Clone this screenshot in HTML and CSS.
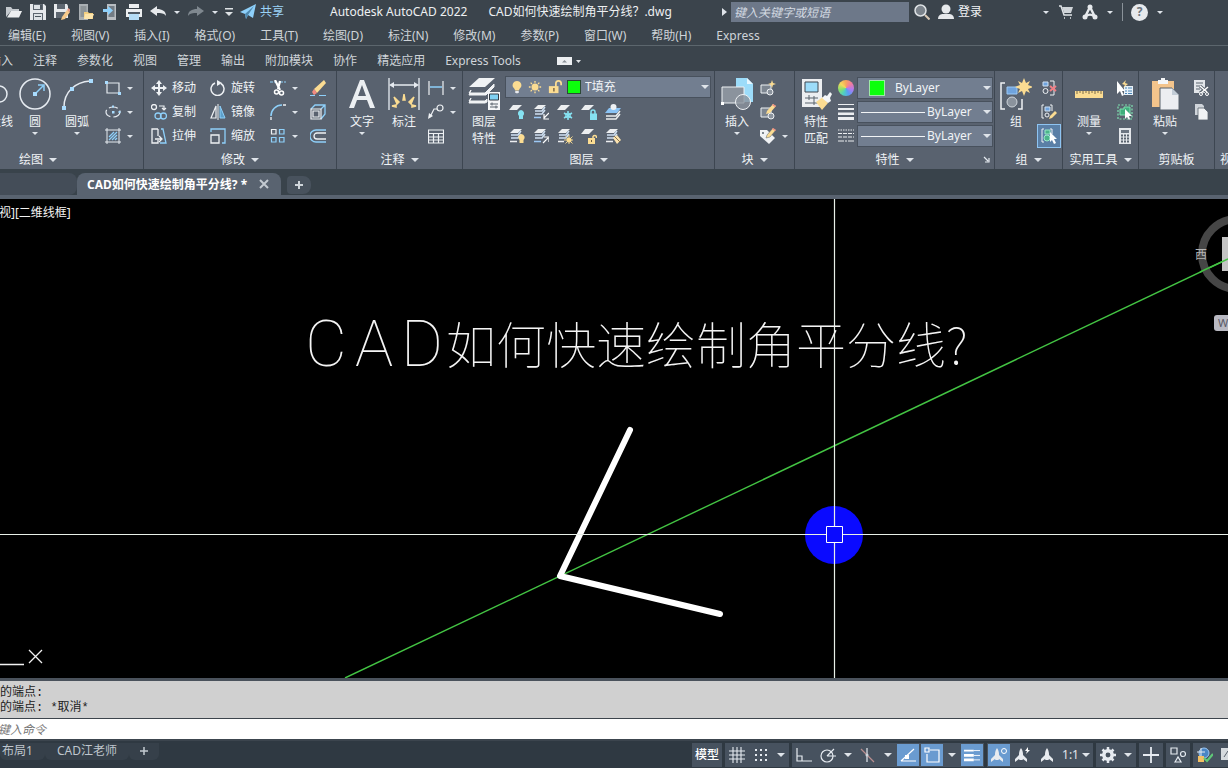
FILE: index.html
```html
<!DOCTYPE html>
<html lang="zh-CN">
<head>
<meta charset="utf-8">
<title>Autodesk AutoCAD 2022</title>
<link rel="stylesheet" href="styles.css">
</head>
<body>
<svg class="defs" aria-hidden="true">
  <defs>
    <symbol id="sheets" viewBox="0 0 16 16">
      <path d="M5 1h8L9 5H1z" fill="#eceef0"/>
      <path d="M2 7h7l3-4M2 10h7l3-4" fill="none" stroke="#cfe0f2" stroke-width="1.5"/>
    </symbol>
    <symbol id="bulb" viewBox="0 0 12 16">
      <path d="M6 1a5 5 0 0 0-3 9l1 2h4l1-2a5 5 0 0 0-3-9z" fill="currentColor"/><path d="M4 12.500h4v1.500l-1 1H5l-1-1z" fill="#e8eaee"/>
    </symbol>
    <symbol id="sun" viewBox="0 0 16 16">
      <circle cx="8" cy="8" r="4" fill="#fbdc92"/><path d="M8 1v2M8 13v2M1 8h2M13 8h2M3 3l1.500 1.500M11.500 11.500L13 13M13 3l-1.500 1.500M4.500 11.500L3 13" stroke="#fbdc92" stroke-width="1.500"/>
    </symbol>
    <symbol id="openlock" viewBox="0 0 16 16">
      <path d="M9 8V4a3 3 0 0 1 6 0v2" fill="none" stroke="#fbdc92" stroke-width="2"/><path d="M1 7h11v8H1z" fill="#fbdc92"/><path d="M6 9h1.500v4H6z" fill="#6b5a3c"/>
    </symbol>
    <symbol id="person" viewBox="0 0 16 16"><circle cx="8" cy="5" r="4.500" fill="#e6e9ec"/><path d="M0 15c0-4 3-5 5-5h6c2 0 5 1 5 5z" fill="#e6e9ec"/></symbol>
    <symbol id="annot" viewBox="0 0 16 16"><path d="M8 1c2 3 2 5 2 7l4 4v3l-4-3-.5 1h-3L6 12l-4 3v-3l4-4c0-2 0-4 2-7z" fill="#e8ebef"/></symbol>
  </defs>
</svg>

<div class="app">
<header class="titlebar">
  <div class="quick">
    <button aria-label="打开"><svg viewBox="0 0 16 16"><path d="M0 13V3h5l1.500 2H13v2H5z" fill="#c5cacf"/><path d="M5 7h11l-3 6.500H1z" fill="#eceef0"/></svg></button>
    <button aria-label="保存"><svg viewBox="0 0 16 16"><path d="M0 0h14l2 2v14H0z" fill="#e6e9ec"/><path d="M3 0h10v6H3zM3 9h10v7H3z" fill="#5d6670"/><path d="M4 10h8v6H4zM4 1h8v4H4z" fill="#dde2e6"/><path d="M10 1h2v4h-2zM5 12h6v1H5z" fill="#4b555e"/></svg></button>
    <button aria-label="另存为"><svg viewBox="0 0 16 16"><path d="M0 0h13l1 2v12H0z" fill="#e6e9ec"/><path d="M3 0h8v5H3zM2 8h10v6H2z" fill="#5d6670"/><path d="M8 13l5-7 3 2-5 7-4 1z" fill="#f7c98a"/><path d="M13 6l1.500-2 2 2-1 2z" fill="#e99a8a"/></svg></button>
    <button aria-label="从移动设备打开"><svg viewBox="0 0 16 16"><path d="M1 0h9v16H1z" fill="#a9afb3"/><path d="M2.500 2h6v11h-6z" fill="#8d9498"/><path d="M6 8h4l1 1h4v6H6z" fill="#f3cf80"/><path d="M7 10h9l-2 5H6z" fill="#fde5ab"/></svg></button>
    <button aria-label="保存到移动设备"><svg viewBox="0 0 16 16"><path d="M5 0h9v16H5z" fill="#b8bdc2"/><path d="M6.500 2h6v11h-6z" fill="#727c85"/><path d="M1 5h5V2l5 4.500L6 11V8H1z" fill="#8ed0fa"/></svg></button>
    <button aria-label="打印"><svg viewBox="0 0 16 16"><path d="M3 0h10v4H3zM0 5h16v8H0z" fill="#eceff1"/><path d="M2 8h12v2H2z" fill="#4e5962"/><path d="M3 10h10v6H3z" fill="#b4dcf5"/></svg></button>
    <button aria-label="放弃"><svg viewBox="0 0 16 16"><path d="M0 7l7-5v3c5 0 9 2 9 7-2-3-5-3-9-3v3z" fill="#e6e9ec"/></svg></button>
    <button class="slim" aria-label="放弃列表"><i class="caret"></i></button>
    <button aria-label="重做"><svg viewBox="0 0 16 16"><path d="M16 7L9 2v3c-5 0-9 2-9 7 2-3 5-3 9-3v3z" fill="#7f888f"/></svg></button>
    <button class="slim" aria-label="重做列表"><i class="caret"></i></button>
    <button class="slim" aria-label="自定义"><svg viewBox="0 0 10 16"><path d="M1 4h8v1.500H1zM1 8h8l-4 4z" fill="#dfe3e6"/></svg></button>
    <button class="share"><svg viewBox="0 0 16 16"><path d="M0 8L16 0l-3 14-5-3-2 4-1-5z" fill="#8ed0fa"/><path d="M5 10l9-8-6 9-2 4z" fill="#4f88ae"/></svg>共享</button>
  </div>
  <div class="doc"><span>Autodesk AutoCAD 2022</span><span>CAD如何快速绘制角平分线？.dwg</span></div>
  <div class="account">
    <i class="caret side"></i>
    <input class="search" type="search" aria-label="搜索" placeholder="键入关键字或短语">
    <button aria-label="查找"><svg viewBox="0 0 16 16"><circle cx="6.500" cy="6.500" r="5.500" fill="#7b838b" stroke="#dfe3e6" stroke-width="1.500"/><path d="M11 11l4.500 4.500" stroke="#d9c9b5" stroke-width="2"/></svg></button>
    <button class="login"><svg viewBox="0 0 16 16"><use href="#person"/></svg>登录</button>
    <button class="slim" aria-label="账户列表"><i class="caret"></i></button>
    <button aria-label="商店"><svg viewBox="0 0 16 16"><path d="M1 2h2l3 9h8M6 14h1M12 14h1" fill="none" stroke="#dfe3e6" stroke-width="1.500"/><path d="M4 3h11l-2 6H6z" fill="#cfd4d8"/></svg></button>
    <button aria-label="应用程序"><svg viewBox="0 0 16 16"><path d="M8 3L3 13M8 3l5 10M3 13c3-3 7-3 10 0" fill="none" stroke="#e6e9ec" stroke-width="2.500"/><circle cx="8" cy="3" r="2.500" fill="#e6e9ec"/><circle cx="3" cy="13" r="2.500" fill="#e6e9ec"/><circle cx="13" cy="13" r="2.500" fill="#e6e9ec"/></svg></button>
    <button class="slim" aria-label="应用列表"><i class="caret"></i></button>
    <i class="divider"></i>
    <button class="help" aria-label="帮助">?</button>
    <button class="slim" aria-label="帮助列表"><i class="caret"></i></button>
  </div>
</header>

<nav class="menubar">
  <button>编辑(E)</button><button>视图(V)</button><button>插入(I)</button><button>格式(O)</button><button>工具(T)</button><button>绘图(D)</button><button>标注(N)</button><button>修改(M)</button><button>参数(P)</button><button>窗口(W)</button><button>帮助(H)</button><button>Express</button>
</nav>
<nav class="tabs">
  <button>插入</button><button>注释</button><button>参数化</button><button>视图</button><button>管理</button><button>输出</button><button>附加模块</button><button>协作</button><button>精选应用</button><button>Express Tools</button>
  <button class="minimize" aria-label="最小化功能区"><svg viewBox="0 0 24 8"><path d="M0 0h15v8H0z" fill="#eceff1"/><path d="M5 5.500h5L7.500 3z" fill="#8a9198"/><path d="M19 3h5l-2.500 3z" fill="#dfe3e6"/></svg></button>
</nav>

<section class="ribbon">
  <div class="panel draw">
    <div class="body">
      <button class="big"><svg viewBox="0 0 32 32"><path d="M2 24h18a8 8 0 0 0 0-16" fill="none" stroke="#e6ebf1" stroke-width="1.500"/><path d="M17 6h4v4h-4zM17 22h4v4h-4z" fill="#8ed0fa"/></svg>多段线</button>
      <button class="big"><svg viewBox="0 0 32 32"><circle cx="16" cy="16" r="15" fill="none" stroke="#e6ebf1" stroke-width="1.500"/><path d="M16 16l8-8M19 7h6v6" fill="none" stroke="#8ed0fa" stroke-width="1.500"/><path d="M14 14h4v4h-4z" fill="#a9dcff"/></svg>圆<i class="caret"></i></button>
      <button class="big"><svg viewBox="0 0 32 32"><path d="M3 29C3 14 14 4 29 3" fill="none" stroke="#e6ebf1" stroke-width="1.500"/><path d="M1 28h4v4H1zM9 9h4v4H9zM28 1h4v4h-4z" fill="#a9dcff"/></svg>圆弧<i class="caret"></i></button>
      <div class="stack">
        <button class="tool" aria-label="矩形"><svg viewBox="0 0 16 16"><path d="M2 3h12v10H2z" fill="none" stroke="#e6ebf1" stroke-width="1.200"/><path d="M0 1h3v3H0zM13 12h3v3h-3z" fill="#a9dcff"/></svg><i class="caret"></i></button>
        <button class="tool" aria-label="椭圆"><svg viewBox="0 0 16 16"><ellipse cx="8" cy="8" rx="7" ry="5" fill="none" stroke="#e6ebf1" stroke-width="1.200" stroke-dasharray="9 3"/><path d="M7 7h2.500v2.500H7zM7 1.500h2v2H7zM13.500 7h2v2h-2z" fill="#a9dcff"/></svg><i class="caret"></i></button>
        <button class="tool" aria-label="图案填充"><svg viewBox="0 0 16 16"><path d="M0 2h16M0 14h16M2 0v16M14 0v16" stroke="#e6ebf1"/><path d="M4 9l5-5M4 12l8-8M7 12l5-5M10 12l2-2" stroke="#8ed0fa" stroke-width="1.300"/></svg><i class="caret"></i></button>
      </div>
    </div>
    <button class="caption">绘图<i class="caret wide"></i></button>
  </div>

  <div class="panel modify">
    <div class="body">
      <button class="tool"><svg viewBox="0 0 16 16"><path d="M8 0l3 4H9v3h3V5l4 3-4 3V9H9v3h2l-3 4-3-4h2V9H4v2L0 8l4-3v2h3V4H5z" fill="#eef1f4"/></svg>移动</button>
      <button class="tool"><svg viewBox="0 0 16 16"><path d="M11 3.500A6.500 6.500 0 1 1 5 3" fill="none" stroke="#eef1f4" stroke-width="1.500"/><path d="M7 0l5 3-5 3z" fill="#eef1f4"/></svg>旋转</button>
      <button class="tool" aria-label="修剪"><svg viewBox="0 0 16 16"><path d="M0 2h6M10 2h6" stroke="#8ed0fa" stroke-dasharray="3 1"/><path d="M5 0l5 10M10 1L8 9" stroke="#fff" stroke-width="2.200"/><circle cx="6.500" cy="12" r="2" fill="none" stroke="#fff" stroke-width="1.500"/><circle cx="11.500" cy="13" r="2" fill="none" stroke="#fff" stroke-width="1.500"/></svg><i class="caret"></i></button>
      <button class="tool" aria-label="删除"><svg viewBox="0 0 16 16"><path d="M4 9L14 0l2 3-9 10z" fill="#fbdc92"/><path d="M4 9l3 4-3 2-2-3z" fill="#f28b82"/><path d="M0 15.500h5M9 15.500h7" stroke="#8ed0fa"/></svg></button>
      <button class="tool"><svg viewBox="0 0 16 16"><circle cx="3" cy="3" r="2.500" fill="none" stroke="#eef1f4" stroke-width="1.300"/><path d="M8 2h5v4M11 4l2 2 2-2" fill="none" stroke="#eef1f4" stroke-width="1.200"/><circle cx="7" cy="12" r="3" fill="none" stroke="#8ed0fa" stroke-width="1.300"/><circle cx="12.500" cy="12" r="3" fill="none" stroke="#8ed0fa" stroke-width="1.300"/></svg>复制</button>
      <button class="tool"><svg viewBox="0 0 16 16"><path d="M6 2v12H1z" fill="none" stroke="#eef1f4" stroke-width="1.200"/><path d="M8 0v16" stroke="#eef1f4"/><path d="M10 2v12h5z" fill="#5d9fc9" stroke="#8ed0fa"/></svg>镜像</button>
      <button class="tool" aria-label="圆角"><svg viewBox="0 0 16 16"><path d="M1 16v-3M13 1h3" stroke="#eef1f4" stroke-width="1.300"/><path d="M1 12A11 11 0 0 1 12 1" fill="none" stroke="#8ed0fa" stroke-width="1.500"/></svg><i class="caret"></i></button>
      <button class="tool" aria-label="分解"><svg viewBox="0 0 16 16"><path d="M1 5l4-4h10v9l-4 5M11 5l4-4M5 1" fill="none" stroke="#8ed0fa" stroke-width="1.300"/><path d="M1 5h10v10H1zM3 7h6v6H3z" fill="none" stroke="#eef1f4" stroke-width="1.200"/></svg></button>
      <button class="tool"><svg viewBox="0 0 16 16"><path d="M7 1H1v14h6v-3M7 1v7" fill="none" stroke="#eef1f4" stroke-width="1.300"/><path d="M4 11h6M8 8l3 3-3 3" fill="none" stroke="#eef1f4" stroke-width="1.300"/><path d="M10 1h2l3 14h-6" fill="none" stroke="#8ed0fa" stroke-width="1.300"/></svg>拉伸</button>
      <button class="tool"><svg viewBox="0 0 16 16"><path d="M1 4V1h14v14h-3" fill="none" stroke="#8ed0fa" stroke-width="1.300"/><path d="M1 7h8v8H1z" fill="none" stroke="#eef1f4" stroke-width="1.300"/></svg>缩放</button>
      <button class="tool" aria-label="阵列"><svg viewBox="0 0 16 16"><path d="M1.500 1.500h4.500v4.500H1.500z" fill="none" stroke="#eef1f4" stroke-width="1.200"/><path d="M9.500 1.500H14v4.500H9.500zM1.500 9.500H6V14H1.500zM9.500 9.500H14V14H9.500z" fill="none" stroke="#8ed0fa" stroke-width="1.200"/></svg><i class="caret"></i></button>
      <button class="tool" aria-label="偏移"><svg viewBox="0 0 16 16"><path d="M16 2H6a6 6 0 0 0 0 12h10" fill="none" stroke="#8ed0fa" stroke-width="1.300"/><path d="M16 5H7a3 3 0 0 0 0 6h9" fill="none" stroke="#eef1f4" stroke-width="1.300"/></svg></button>
    </div>
    <button class="caption">修改<i class="caret wide"></i></button>
  </div>

  <div class="panel annotate">
    <div class="body">
      <button class="big"><svg viewBox="0 0 32 32"><path d="M3 30L14 2h4l11 28h-5l-3-8H11l-3 8zM12 18h8L16 7z" fill="#eceff2"/></svg>文字<i class="caret"></i></button>
      <button class="big"><svg viewBox="0 0 32 32"><path d="M1 0v32M31 0v32M3 7h26" stroke="#e6ebf1" stroke-width="1.300"/><path d="M1 7l5-3v6zM31 7l-5-3v6z" fill="#e6ebf1"/><path d="M15 22l1-6 1 6zM11 24l-5-5 3 7zM21 24l5-5-3 7zM8 29l-4-1 4-1zM24 29l4-1-4-1z" fill="#fbdc92" stroke="#fbdc92" stroke-width="1.500"/></svg>标注</button>
      <div class="stack">
        <button class="tool" aria-label="线性"><svg viewBox="0 0 16 16"><path d="M1 1v14M15 1v14" stroke="#eef1f4" stroke-width="1.200"/><path d="M2 7h12" stroke="#8ed0fa" stroke-width="1.500"/></svg><i class="caret"></i></button>
        <button class="tool" aria-label="引线"><svg viewBox="0 0 16 16"><circle cx="12" cy="4" r="3" fill="none" stroke="#eef1f4" stroke-width="1.200"/><path d="M9 5H6l-4 8" fill="none" stroke="#eef1f4" stroke-width="1.200"/><path d="M0 15l1-6 4 3z" fill="#eef1f4"/></svg><i class="caret"></i></button>
        <button class="tool" aria-label="表格"><svg viewBox="0 0 16 16"><path d="M.5 2h15v13H.5zM0 5.500h16M0 9h16M0 12h16M5.500 5v10M10.500 5v10" fill="none" stroke="#eef1f4" stroke-width="1.200"/></svg></button>
      </div>
    </div>
    <button class="caption">注释<i class="caret wide"></i></button>
  </div>

  <div class="panel layers">
    <div class="body">
      <button class="big"><svg viewBox="0 0 32 32"><path d="M11 0h16L17 9H1z" fill="#f0f2f4"/><path d="M3 12l-2 3h16l9-9v3l-8 8H1zM3 20l-2 3h16l2-2v3l-2 1H1z" fill="#f0f2f4" stroke="#f0f2f4"/><path d="M20 14h12v18H20z" fill="#f4f6f8"/><path d="M21.500 16h9v6h-9z" fill="#7fd0f2" stroke="#333b44"/><path d="M22 26h8M22 29h8M24 24.500v3M28 27.500v3" stroke="#59626d"/></svg>图层<br>特性</button>
      <div class="layergrid">
        <div class="combo">
          <svg class="w12 warm" viewBox="0 0 12 16"><use href="#bulb"/></svg>
          <svg viewBox="0 0 16 16"><use href="#sun"/></svg>
          <svg viewBox="0 0 16 16"><use href="#openlock"/></svg>
          <i class="swatch"></i>
          <select aria-label="图层"><option>T填充</option></select><i class="caret wide"></i>
        </div>
        <button class="tool" aria-label="关闭图层"><svg viewBox="0 0 16 16"><path d="M4 1h9L8 6H0z" fill="#eceef0"/><path d="M12 6a3.500 3.500 0 0 0-2 6v3h4v-3a3.500 3.500 0 0 0-2-6z" fill="#86e2f2"/></svg></button>
        <button class="tool" aria-label="隔离图层"><svg viewBox="0 0 16 16"><use href="#sheets"/><path d="M1 13.500h7" stroke="#9cc8f5" stroke-width="1.500"/><path d="M16 9l-5 5M11 10v5h5" fill="none" stroke="#fff" stroke-width="1.200"/></svg></button>
        <button class="tool" aria-label="冻结图层"><svg viewBox="0 0 16 16"><path d="M4 1h9L8 6H0z" fill="#eceef0"/><path d="M11 7v9M7 9l8 5M15 9l-8 5" stroke="#86e2f2" stroke-width="1.500"/><circle cx="11" cy="11.500" r="2.500" fill="none" stroke="#86e2f2"/></svg></button>
        <button class="tool" aria-label="锁定图层"><svg viewBox="0 0 16 16"><path d="M4 1h9L8 6H0z" fill="#eceef0"/><path d="M10 10V8a2 2 0 0 1 4 0v2" fill="none" stroke="#86e2f2" stroke-width="1.500"/><path d="M9 9.500h7V16H9z" fill="#86e2f2"/></svg></button>
        <button class="tool" aria-label="置为当前"><svg viewBox="0 0 16 16"><path d="M4 4h12l-4 5H0z" fill="#8ac3f5"/><circle cx="8.500" cy="3" r="3" fill="#eef1f4"/><path d="M1 12h10l4-5M1 15h10l4-5" fill="none" stroke="#eceef0" stroke-width="1.500"/></svg></button>
        <button class="tool first" aria-label="打开所有图层"><svg viewBox="0 0 16 16"><use href="#sheets"/><path d="M1 13.500h7" stroke="#eceef0" stroke-width="1.500"/><path d="M12.500 6a3.500 3.500 0 0 0-2 6v3h4v-3a3.500 3.500 0 0 0-2-6z" fill="#fbdc92"/></svg></button>
        <button class="tool" aria-label="取消隔离"><svg viewBox="0 0 16 16"><use href="#sheets"/><path d="M1 13.500h7" stroke="#9cc8f5" stroke-width="1.500"/><path d="M10 15l5-5M11 9h5v5" fill="none" stroke="#fff" stroke-width="1.200"/></svg></button>
        <button class="tool" aria-label="解冻"><svg viewBox="0 0 16 16"><use href="#sheets"/><path d="M1 13.500h6" stroke="#eceef0" stroke-width="1.500"/><circle cx="12" cy="12" r="2.500" fill="#fbdc92"/><path d="M12 7v10M7 12h10M8.500 8.500l7 7M15.500 8.500l-7 7" stroke="#fbdc92" stroke-width=".9"/></svg></button>
        <button class="tool" aria-label="解锁"><svg viewBox="0 0 16 16"><path d="M4 1h9L8 6H0z" fill="#eceef0"/><path d="M12 10V8.500a2 2 0 0 1 3.500 0V10" fill="none" stroke="#fbdc92" stroke-width="1.500"/><path d="M7 10h7v6H7z" fill="#fbdc92"/><path d="M10 12h1v2h-1z" fill="#6b5a3c"/></svg></button>
        <button class="tool" aria-label="图层匹配"><svg viewBox="0 0 16 16"><use href="#sheets"/><path d="M1 13.500h7" stroke="#eceef0" stroke-width="1.500"/><path d="M8 10l4-3 4 5-4 4z" fill="#fbe3b0"/><path d="M9 8l6 6" stroke="#8a744c"/></svg></button>
      </div>
    </div>
    <button class="caption">图层<i class="caret wide"></i></button>
  </div>

  <div class="panel block">
    <div class="body">
      <button class="big"><svg viewBox="0 0 32 32"><path d="M15 0h11l6 6v18H15z" fill="#9cdcfa"/><path d="M26 0v6h6z" fill="#e6f6ff"/><path d="M1 9h22v16H1z" fill="#8b939d" stroke="#eef1f4"/><circle cx="22" cy="24" r="7.500" fill="#8b939d" fill-opacity=".8" stroke="#eef1f4"/><path d="M0 24h3v3H0z" fill="#fff"/></svg>插入<i class="caret"></i></button>
      <div class="stack">
        <button class="tool" aria-label="创建块"><svg viewBox="0 0 16 16"><path d="M1 5h10v8H1z" fill="#7d8691" stroke="#eef1f4"/><circle cx="10" cy="12" r="3" fill="#8b939d" stroke="#eef1f4"/><path d="M12 0l1 3 3 1-3 1-1 3-1-3-3-1 3-1z" fill="#fbdc92"/></svg></button>
        <button class="tool" aria-label="编辑块"><svg viewBox="0 0 16 16"><path d="M1 4h10v9H1z" fill="#7d8691" stroke="#eef1f4"/><circle cx="11" cy="12" r="3" fill="#8b939d" stroke="#eef1f4"/><path d="M6 10l1-3 6-7 3 2-6 7z" fill="#fbdc92"/><path d="M13 0l3 2-1 1-3-2z" fill="#f28b82"/></svg></button>
        <button class="tool" aria-label="编辑属性"><svg viewBox="0 0 16 16"><path d="M0 2h7l8 8-6 6-9-8z" fill="#f0f2f4"/><circle cx="3" cy="5" r="1" fill="#59626d"/><path d="M6 10l1-3 6-7 3 2-6 7z" fill="#fbdc92" stroke="#59626d" stroke-width=".5"/><path d="M13 0l3 2-1 1-3-2z" fill="#f28b82"/></svg><i class="caret"></i></button>
      </div>
    </div>
    <button class="caption">块<i class="caret wide"></i></button>
  </div>

  <div class="panel props">
    <div class="body">
      <button class="big"><svg viewBox="0 0 32 32"><path d="M2 1h20v28H2z" fill="#eceef1"/><path d="M5 4h13v10H5z" fill="#9cdcfa" stroke="#3e4650"/><path d="M5 20h13M5 25h13M9 17v5M14 18v9" stroke="#59626d"/><path d="M16 24l7-5 5 6-6 7z" fill="#fbdc92"/><path d="M22 20l3-3 2 1 3-4 2 2-2 4 1 3-3 2z" fill="#f4f6f8"/></svg>特性<br>匹配</button>
      <div class="stack">
        <button class="tool" aria-label="对象颜色"><i class="wheel"></i></button>
        <button class="tool" aria-label="对象线宽"><svg viewBox="0 0 16 16"><path d="M0 0h16v1H0zM0 4h16v2H0zM0 8.500h16v2.500H0zM0 13h16v3H0z" fill="#eceef1"/></svg></button>
        <button class="tool" aria-label="对象线型"><svg viewBox="0 0 16 16"><path d="M0 2h16" stroke="#eceef1" stroke-dasharray="1.500 1"/><path d="M0 5.500h16M0 9h16" stroke="#eceef1" stroke-dasharray="4 1"/><path d="M0 13h16" stroke="#eceef1" stroke-dasharray="6 1 2 1"/></svg></button>
      </div>
      <div class="stack fill">
        <div class="combo color"><i class="swatch"></i><select aria-label="颜色"><option>ByLayer</option></select><i class="caret wide"></i></div>
        <div class="combo line"><i class="rule"></i><select aria-label="线宽"><option>ByLayer</option></select><i class="caret wide"></i></div>
        <div class="combo line"><i class="rule"></i><select aria-label="线型"><option>ByLayer</option></select><i class="caret wide"></i></div>
      </div>
    </div>
    <button class="caption">特性<i class="caret wide"></i><svg class="launch" viewBox="0 0 8 8"><path d="M1 1l4 4M6 2v4H2" fill="none" stroke="#e6ebf1" stroke-width="1.200"/></svg></button>
  </div>

  <div class="panel group">
    <div class="body">
      <button class="big"><svg viewBox="0 0 32 32"><path d="M5 5H1v26h4M18 31h4V21" fill="none" stroke="#eef1f4" stroke-width="1.500"/><path d="M7 9h10v7H7z" fill="#6fa3dd" stroke="#9cc8f5"/><circle cx="12" cy="24" r="5" fill="#8b939d" stroke="#cfd5db"/><path d="M24 0l2 5 4-2-2 4 5 2-5 2 2 4-4-2-2 5-2-5-4 2 2-4-5-2 5-2-2-4 4 2z" fill="#fbdc92"/></svg>组</button>
      <div class="stack">
        <button class="tool" aria-label="解除编组"><svg viewBox="0 0 16 16"><path d="M9 1h4v14H9" fill="none" stroke="#eef1f4"/><path d="M2 2h5v4H2z" fill="#6fa3dd" stroke="#cfe0f2"/><circle cx="4.500" cy="11" r="2.500" fill="none" stroke="#eef1f4"/><path d="M9 6l6 5M15 6l-6 5" stroke="#f07f86" stroke-width="2"/></svg></button>
        <button class="tool" aria-label="组编辑"><svg viewBox="0 0 16 16"><path d="M3 1H1v13h2M9 1h2v6" fill="none" stroke="#eef1f4"/><path d="M4 3h5v4H4z" fill="#6fa3dd" stroke="#cfe0f2"/><circle cx="6" cy="11" r="2" fill="none" stroke="#eef1f4"/><path d="M8 15l1-3 5-5 2 2-5 5z" fill="#fbdc92"/></svg></button>
        <button class="tool picked" aria-label="组选择"><svg viewBox="0 0 16 16"><path d="M3 1H1v13h2M9 1h2v5" fill="none" stroke="#eef1f4"/><path d="M4 2h5v4H4z" fill="#4bb58a" stroke="#9be8c8"/><circle cx="6" cy="10" r="3" fill="#4bb58a" stroke="#9be8c8"/><path d="M9 4v10l2-2 2 4 2-1-2-4h3z" fill="#fff"/></svg></button>
      </div>
    </div>
    <button class="caption">组<i class="caret wide"></i></button>
  </div>

  <div class="panel utils">
    <div class="body">
      <button class="big"><svg viewBox="0 0 32 32"><path d="M2 13h28v7H2z" fill="#fbdc92"/><path d="M4 13v3M7 13v2M10 13v3M13 13v2M16 13v3M19 13v2M22 13v3M25 13v2M28 13v3" stroke="#7a6a48"/></svg>测量<i class="caret"></i></button>
      <div class="stack">
        <button class="tool" aria-label="快速选择"><svg viewBox="0 0 16 16"><path d="M7 6h9v9H7z" fill="#e8f1f8"/><path d="M8 8h2M11 8h4M8 11h2M11 11h4M8 13.500h2M11 13.500h4" stroke="#4a86b8"/><path d="M9 0L5 4l3 1-2 3 5-4-3-1z" fill="#fbdc92"/><path d="M0 1v13l3-3 2 5 2-1-2-4h3z" fill="#fff"/></svg></button>
        <button class="tool" aria-label="全部选择"><svg viewBox="0 0 16 16"><path d="M1 1h14v14H1z" fill="none" stroke="#7fe0b0" stroke-width="1.200" stroke-dasharray="2 1.500"/><path d="M3 5h4V3h6v8H3z" fill="#3fae7c" stroke="#7fe0b0"/><path d="M8 5v10l2-2 2 3 1-1-1-3h3z" fill="#fff"/></svg></button>
        <button class="tool" aria-label="计算器"><svg viewBox="0 0 16 16"><path d="M2 0h12v16H2z" fill="#e3e6ea"/><path d="M4 2h8v3H4z" fill="#6b7480"/><path d="M4 7.500h8M4 10.500h8M4 13.500h8" stroke="#59626d" stroke-width="2" stroke-dasharray="2 1"/></svg></button>
      </div>
    </div>
    <button class="caption">实用工具<i class="caret wide"></i></button>
  </div>

  <div class="panel utils">
    <div class="body">
      <button class="big"><svg viewBox="0 0 32 32"><path d="M3 3h22v26H3z" fill="#f3c48c"/><path d="M9 2h3V0h4v2h3v4H9z" fill="#f4f6f8"/><path d="M11 10h12l7 7v15H11z" fill="#eceef1" stroke="#59626d"/><path d="M23 10v7h7z" fill="#c2ccd6"/></svg>粘贴<i class="caret"></i></button>
      <div class="stack">
        <button class="tool" aria-label="剪切"><svg viewBox="0 0 16 16"><path d="M1 0h11v13H1z" fill="#e3e6ea"/><path d="M3 3h7M3 6h4M3 9h4" stroke="#59626d"/><path d="M7 6l8 7M15 7l-8 6" stroke="#59626d" stroke-width="3"/><path d="M7 6l7 6M15 7l-7 6" stroke="#fff" stroke-width="1.500"/><circle cx="8" cy="14" r="1.500" fill="none" stroke="#fff"/><circle cx="14" cy="14" r="1.500" fill="none" stroke="#fff"/></svg></button>
        <button class="tool" aria-label="复制剪裁"><svg viewBox="0 0 16 16"><path d="M2 0h7l2 2v9H2z" fill="#cfd4da"/><path d="M5 4h6l4 4v8H5z" fill="#f0f2f4" stroke="#59626d" stroke-width=".8"/></svg></button>
      </div>
    </div>
    <button class="caption">剪贴板</button>
  </div>
  <div class="panel view"><div class="body"></div><button class="caption">视图</button></div>
</section>

<div class="files">
  <div class="file idle"></div>
  <div class="file"><b>CAD如何快速绘制角平分线? *</b><button aria-label="关闭"><svg viewBox="0 0 10 10"><path d="M1 1l8 8M9 1L1 9" stroke="#c3cad1" stroke-width="2"/></svg></button></div>
  <button class="newfile" aria-label="新图形"><svg viewBox="0 0 10 10"><path d="M5 1v8M1 5h8" stroke="#cfd5da" stroke-width="2"/></svg></button>
</div>

<main class="canvas">
  <svg class="drawing" aria-label="图形">
    <path d="M345 479L1228 60" stroke="#43c443" stroke-width="1.400"/>
    <path d="M630 231L560 377M560 377L720 415" stroke="#fff" stroke-width="6" stroke-linecap="round"/>
    <circle cx="834" cy="336" r="29" fill="#0a0aff"/>
    <path d="M0 335.500H826M843 335.500H1600M834.500 0V327M834.500 344V1200" stroke="#e8f0e8" stroke-width="1.200"/>
    <path d="M826.500 327.500h16v16h-16z" fill="none" stroke="#fff"/>
    <path d="M0 465.500h24M29 451l13 13M42 451l-13 13" stroke="#f2f2f2" stroke-width="1.300"/>
    <circle cx="1237" cy="55" r="35" fill="none" stroke="#464646" stroke-width="8"/>
    <path d="M1222 38h30v34h-30z" fill="#c4c4c4"/>
    <path d="M1200 73L1228 60" stroke="#43c443" stroke-width="1.400"/>
  </svg>
  <span class="viewlabel">[俯视][二维线框]</span>
  <h1 class="headline"><span>C</span><span>A</span><span>D</span><em>如何快速绘制角平分线?</em></h1>
  <span class="west">西</span>
  <button class="wcs">WCS</button>
</main>

<section class="command">
  <div class="history"><p>的端点:</p><p>的端点: *取消*</p></div>
  <input class="prompt" type="text" aria-label="命令" placeholder="键入命令">
</section>

<footer class="status">
  <div class="layouts"><button>布局1</button><button>CAD江老师</button><button class="add" aria-label="新建布局"><svg viewBox="0 0 10 10"><path d="M5 1v8M1 5h8" stroke="#c3cad1" stroke-width="1.500"/></svg></button></div>
  <div class="set"><button class="model">模型</button></div>
  <div class="set">
    <button aria-label="栅格"><svg viewBox="0 0 16 16"><path d="M4 0v16M8 0v16M12 0v16M0 4h16M0 8h16M0 12h16" stroke="#e6ebf1" stroke-width="1.100"/></svg></button>
    <button aria-label="捕捉"><svg viewBox="0 0 16 16"><path d="M2 3h13M2 8h13M2 13h13" stroke="#e6ebf1" stroke-width="2" stroke-dasharray="2 3"/></svg></button>
    <button class="drop" aria-label="捕捉设置"><i class="caret wide"></i></button>
  </div>
  <div class="set">
    <button aria-label="正交"><svg viewBox="0 0 16 16"><path d="M1 1v13h15M1 9h5v5" fill="none" stroke="#e6ebf1" stroke-width="1.200"/></svg></button>
    <button aria-label="极轴"><svg viewBox="0 0 16 16"><circle cx="7" cy="9" r="6" fill="none" stroke="#e6ebf1" stroke-width="1.200"/><path d="M7 9h9M7 9l7-7" stroke="#e6ebf1" stroke-width="1.200"/></svg></button>
    <button class="drop" aria-label="极轴设置"><i class="caret wide"></i></button>
    <button aria-label="等轴测"><svg viewBox="0 0 16 16"><path d="M7 1v14" stroke="#e6ebf1" stroke-width="1.200"/><path d="M1 2l13 13" stroke="#b98f90" stroke-width="1.200"/><circle cx="7" cy="8" r="1.500" fill="#cfd5db"/></svg></button>
    <button class="drop" aria-label="等轴测设置"><i class="caret wide"></i></button>
    <button class="on" aria-label="对象捕捉追踪"><svg viewBox="0 0 16 16"><path d="M1 14L14 2M1 14h15" stroke="#fff" stroke-width="1.200"/><path d="M5 8h4v4H5z" fill="#fff"/></svg></button>
    <button class="on" aria-label="对象捕捉"><svg viewBox="0 0 16 16"><path d="M6 3h9v12H3V7" fill="none" stroke="#fff" stroke-width="1.200"/><path d="M1 1h4v4H1z" fill="none" stroke="#fff" stroke-width="1.200"/></svg></button>
    <button class="drop" aria-label="捕捉列表"><i class="caret wide"></i></button>
    <button class="on" aria-label="线宽显示"><svg viewBox="0 0 18 16"><path d="M0 2h11v2H0zM0 7h11v3H0zM0 12h11v3H0z" fill="#fff"/><path d="M11 3h7M11 8.500h7M11 13.500h7" stroke="#fff" stroke-width="1"/></svg></button>
  </div>
  <div class="set">
    <button class="on" aria-label="注释可见性"><svg viewBox="0 0 16 16"><svg x="-2" width="16" height="16"><use href="#annot"/></svg><circle cx="13" cy="4" r="2.500" fill="none" stroke="#fff"/></svg></button>
    <button aria-label="自动缩放"><svg viewBox="0 0 16 16"><svg x="-2" width="16" height="16"><use href="#annot"/></svg><path d="M13 0l-3 4h2l-1 3 4-4h-2z" fill="#fff"/></svg></button>
    <button aria-label="注释比例"><svg viewBox="0 0 16 16"><use href="#annot"/></svg></button>
    <button class="scale">1:1<i class="caret wide"></i></button>
  </div>
  <div class="set">
    <button aria-label="切换工作空间"><svg viewBox="0 0 16 16"><circle cx="8" cy="8" r="4.200" fill="none" stroke="#e6ebf1" stroke-width="3.500"/><path d="M8 0v3M8 13v3M0 8h3M13 8h3M2.500 2.500l2 2M11.500 11.500l2 2M13.500 2.500l-2 2M4.500 11.500l-2 2" stroke="#e6ebf1" stroke-width="2.500"/></svg></button>
    <button class="drop" aria-label="工作空间列表"><i class="caret wide"></i></button>
  </div>
  <div class="set"><button aria-label="注释监视器"><svg viewBox="0 0 16 16"><path d="M8 0v16M0 8h16" stroke="#e6ebf1" stroke-width="1.800"/></svg></button></div>
  <div class="set"><button aria-label="隔离对象"><svg viewBox="0 0 16 16"><path d="M1 1h6v6H1zM5 15l3-5 3 5z" fill="none" stroke="#e6ebf1" stroke-width="1.200"/><circle cx="13" cy="7" r="2.500" fill="none" stroke="#e6ebf1" stroke-width="1.200"/></svg></button></div>
  <div class="set">
    <button aria-label="硬件加速"><svg viewBox="0 0 16 16"><circle cx="7" cy="6" r="5" fill="#4a86c4" stroke="#9cc8f5"/><path d="M0 5h8M4 1v8" stroke="#e6ebf1"/><path d="M1 9h6v6H1z" fill="#f3c064"/><path d="M7 11l3 3 6-7" fill="none" stroke="#5fc878" stroke-width="2.200"/></svg></button>
    <button class="last" aria-label="全屏显示"><svg viewBox="0 0 16 16"><path d="M0 1h16v12H0z" fill="#d5dade"/><path d="M3 10l4-6 4 6 3-3" fill="none" stroke="#59626d"/></svg></button>
  </div>
</footer>
</div>
</body>
</html>
```
FILE: styles.css
```css
* { box-sizing: border-box; }
body {
  margin: 0;
  overflow: hidden;
  background: #3b444c;
  color: #e2e6ea;
  font: 12px/16px "Noto Sans", "Noto Sans CJK SC", sans-serif;
}
.defs { position: absolute; width: 0; height: 0; }
button, input, select { font: inherit; color: inherit; border: 0; margin: 0; padding: 0; background: none; }
button { display: flex; align-items: center; flex: none; white-space: nowrap; }
svg { display: block; flex: none; width: 16px; height: 16px; }
p { margin: 0; }
.app { display: flex; flex-direction: column; height: 100vh; overflow: hidden; }

.caret { flex: none; width: 0; height: 0; border: 3px solid transparent; border-top-color: #dfe4ea; border-bottom: 0; }
.caret.wide { border-width: 4px; border-bottom: 0; }
.caret.side { border: 4px solid transparent; border-left: 5px solid #dfe4ea; border-right: 0; }

/* Title bar */
.titlebar { display: flex; align-items: center; height: 24px; flex: none; }
.quick { display: flex; align-items: center; gap: 8px; padding-left: 6px; width: 330px; flex: none; }
.quick .slim { width: 6px; justify-content: center; }
.quick .slim svg { width: 10px; }
.share { gap: 4px; color: #9bd3f7; }
.doc { display: flex; gap: 21px; flex: 1; color: #eef0f2; white-space: nowrap; }
.account { display: flex; align-items: center; gap: 8px; width: 506px; flex: none; }
.account .search { width: 178px; height: 20px; padding: 0 3px; background: #6d7889; border-radius: 0; outline: 0; }
.search::placeholder { color: #d3dae2; font-style: italic; opacity: 1; }
.account > .side { margin-right: -4px; }
.search + button { margin-left: -3px; }
.login { gap: 4px; width: 96px; color: #f2f4f6; }
.account .slim { width: 8px; justify-content: center; }
.divider { width: 1px; height: 18px; background: #8a9299; }
.help { width: 17px; height: 17px; justify-content: center; border-radius: 50%; background: #e6e9ec; color: #6a737b; font-weight: bold; }

/* Menus */
.menubar { display: flex; gap: 25px; height: 22px; padding: 2px 0 0 8px; flex: none; border-bottom: 1px solid #5c666d; color: #cfd4d9; }
.tabs { display: flex; align-items: center; gap: 20px; height: 24px; padding-top: 6px; margin-left: -11px; flex: none; color: #cfd4d9; }
.minimize { margin-left: 16px; }
.minimize svg { width: 24px; height: 8px; }

/* Ribbon */
.ribbon { display: grid; grid-template-columns: 144px 193px 126px 252px 80px 200px 68px 76px 76px 1fr; flex: none; height: 99px; overflow: hidden; background: #3a434c; padding-top: 1px; }
.panel { display: flex; flex-direction: column; min-width: 0; background: #59626f; border-right: 1px solid #3d4651; padding-top: 5px; color: #f0f3f6; }
.body { display: flex; height: 72px; }
.caption { justify-content: center; gap: 6px; height: 21px; padding-top: 2px; }
.big { flex-direction: column; padding-top: 2px; line-height: 17px; }
.big svg { width: 32px; height: 32px; margin-bottom: 3px; }
.big .caret { margin-top: 2px; }
.stack { display: flex; flex-direction: column; flex: none; }
.stack.fill { flex: 1; }
.tool { height: 24px; gap: 5px; }
.tool .caret { margin-left: 1px; }
.draw .body { margin-left: -23px; }
.draw .big { width: 44px; }
.draw .big:first-child { width: 36px; }
.draw .big:nth-child(3) { width: 40px; }
.draw .stack { padding-left: 8px; }
.draw .caption { padding-right: 67px; }
.modify .body { display: grid; grid-template-columns: 59px 60px 40px 20px; grid-auto-rows: 24px; padding-left: 7px; }
.annotate .body { padding-left: 4px; }
.annotate .big { width: 42px; }
.annotate .stack { padding-left: 3px; }
.layers .big { width: 42px; }
.layergrid { display: grid; grid-template-columns: repeat(5, 24px) 1fr; grid-auto-rows: 24px; flex: 1; padding-right: 3px; }
.layergrid .combo { grid-column: 1 / -1; }
.layergrid .tool { justify-content: center; }
.layergrid .first { grid-column: 1; }
.combo { display: flex; align-items: center; height: 22px; background: #727e90; border: 1px solid #48515d; padding: 0 1px; }
.combo select { flex: 1; min-width: 0; appearance: none; outline: 0; padding: 0; }
.layergrid .combo { gap: 4px; padding: 0 1px 0 5px; }
.combo .w12 { width: 12px; }
.warm { color: #fbdc92; }
.layergrid .combo svg { height: 14px; }
.swatch { width: 14px; height: 14px; background: #0cff0c; border: 1px solid #2c4a35; }
.block .big { width: 44px; }
.block .stack { padding-left: 1px; }
.props .big { width: 42px; }
.props .stack:nth-child(2) { padding: 0 3px 0 1px; }
.props .combo { margin: 1px 1px 1px 0; }
.combo.color .swatch { width: 16px; height: 16px; margin: 0 10px; border-color: #9fe8a8; }
.rule { width: 64px; height: 1px; margin: 0 2px; background: #f2f4f6; }
.wheel { width: 16px; height: 16px; border-radius: 50%; background: conic-gradient(#f5a45c, #f07aa0, #b07af0, #5a9cf5, #4fd0c0, #8ee06a, #f5d85c, #f5a45c); }
.props .caption { position: relative; }
.launch { position: absolute; right: 3px; bottom: 5px; width: 8px; height: 8px; }
.group .big { width: 42px; }
.group .tool { width: 24px; justify-content: center; }
.picked { background: #5a7fa6; border: 1px solid #8ec4f2; }
.utils .big { width: 52px; }
.utils .stack { padding-left: 2px; }
.view { border-right: 0; }
.view .caption { justify-content: flex-start; padding-left: 5px; }

/* Drawing tabs */
.files { display: flex; height: 30px; padding-top: 4px; flex: none; border-bottom: 4px solid #596370; background: #39434b; }
.file { display: flex; align-items: center; gap: 12px; padding: 0 12px 0 10px; border-radius: 8px 8px 0 0; background: #596370; color: #fff; }
.file.idle { width: 77px; background: #444d58; border-radius: 0 8px 8px 0; }
.file b { white-space: nowrap; padding-top: 1px; }
.file svg, .newfile svg { width: 10px; height: 10px; }
.newfile { width: 24px; margin: 3px 0 1px 6px; justify-content: center; background: #48525d; border-radius: 4px 8px 8px 4px; }

/* Drawing area */
.canvas { position: relative; flex: 1; min-height: 0; overflow: hidden; background: #000; }
.drawing { position: absolute; inset: 0; width: 100%; height: 100%; }
.viewlabel { position: absolute; left: -17px; top: 6px; color: #f2f2f2; }
.headline { position: absolute; left: 302px; top: 96px; margin: 0; display: flex; align-items: center; height: 100px; font: 100 64px/100px Roboto, "Noto Sans CJK SC", sans-serif; color: #f4f4f4; white-space: nowrap; }
.headline span { width: 48px; text-align: center; }
.headline em { font: 100 50px/94px "Noto Sans CJK SC", sans-serif; height: 100px; }
.west { position: absolute; left: 1195px; top: 48px; color: #b4b4b4; }
.wcs { position: absolute; left: 1214px; top: 116px; height: 16px; padding: 0 4px; border-radius: 3px; background: #b9b9c2; color: #5a5a66; font-size: 11px; }

/* Command line */
.command { flex: none; border-top: 3px solid #4a525c; background: #d0d0d0; color: #1c1c1c; }
.history { height: 38px; padding-top: 5px; border-bottom: 1px solid #3c444c; font: 12px/15px "Liberation Mono", "Noto Sans CJK SC", monospace; }
.prompt { display: block; width: 100%; height: 20px; background: #fff; outline: 0; text-indent: -2px; }
.prompt::placeholder { color: #777; font-style: italic; opacity: 1; }

/* Status bar */
.status { display: flex; align-items: center; gap: 3px; height: 29px; flex: none; border-top: 2px solid #3c454e; background: #2f3942; overflow: hidden; }
.layouts { display: flex; align-items: flex-start; flex: 1; height: 24px; color: #bfc6cd; }
.layouts button { height: 17px; padding: 0 12px; background: #36404a; border-radius: 0 0 6px 6px; }
.layouts button:first-child { padding-left: 2px; }
.layouts .add { padding: 0 10px; }
.layouts svg { width: 10px; height: 10px; }
.set { display: flex; align-items: center; flex: none; height: 24px; background: #47525f; }
.set button { width: 24px; height: 22px; justify-content: center; }
.set .drop { width: 16px; }
.set .model { width: 30px; color: #fff; font-weight: 500; }
.set .on { width: 22px; margin: 0 1px; background: #6a9bd0; }
.set .scale { width: 34px; gap: 3px; }
.set .last { margin-right: -13px; }
```
